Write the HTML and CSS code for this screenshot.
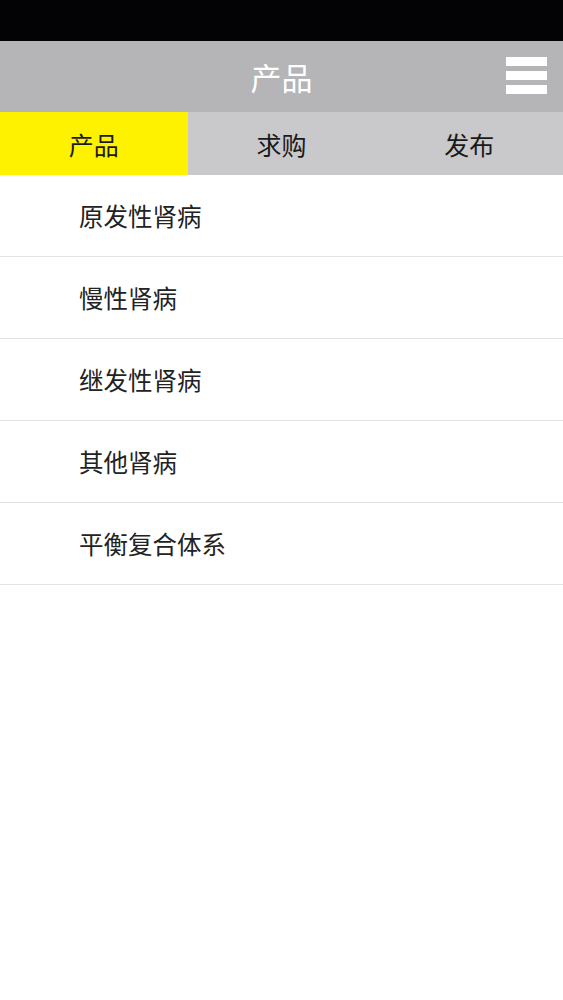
FILE: index.html
```html
<!DOCTYPE html>
<html>

<head>
    <meta charset="UTF-8">
    <title>产品</title>
    <link rel="stylesheet" href="styles.css">
</head>

<body>
    <div class="status-bar"></div>

    <!-- 顶部标题栏 -->
    <div class="header">
        <span class="header-title">产品</span>
        <div class="menu-btn">
            <span></span>
            <span></span>
            <span></span>
        </div>
    </div>

    <!-- 选项卡 -->
    <div class="tabs">
        <div class="tab active">产品</div>
        <div class="tab">求购</div>
        <div class="tab">发布</div>
    </div>

    <!-- 分类列表 -->
    <ul class="category-list">
        <li>原发性肾病</li>
        <li>慢性肾病</li>
        <li>继发性肾病</li>
        <li>其他肾病</li>
        <li>平衡复合体系</li>
    </ul>
</body>

</html>
```

FILE: styles.css
```css
/* 页面基础 */
body {
    margin: 0;
    background: #fff;
    font-family: "Noto Sans CJK SC", "Noto Sans", sans-serif;
}

.status-bar {
    height: 41px;
    background: #030305;
}

.header {
    position: relative;
    height: 71px;
    background: #b5b4b6;
    display: flex;
    align-items: center;
    justify-content: center;
}

.header-title {
    color: #fff;
    font-size: 31px;
    line-height: 1;
}

.menu-btn {
    position: absolute;
    right: 16px;
    top: 16px;
    width: 41px;
    display: flex;
    flex-direction: column;
    gap: 5px;
}

.menu-btn span {
    display: block;
    height: 9px;
    background: #fff;
}

.tabs {
    display: flex;
    height: 63px;
    background: #c9c8cb;
}

.tab {
    flex: 1;
    display: flex;
    align-items: center;
    justify-content: center;
    font-size: 25px;
    color: #1a1a1a;
}

.tab.active {
    background: #fff200;
}

.category-list {
    list-style: none;
    margin: 0;
    padding: 0;
}

.category-list li {
    height: 81px;
    display: flex;
    align-items: center;
    padding-left: 79px;
    font-size: 24.5px;
    color: #222;
    border-bottom: 1px solid #e3e3e3;
}
```
